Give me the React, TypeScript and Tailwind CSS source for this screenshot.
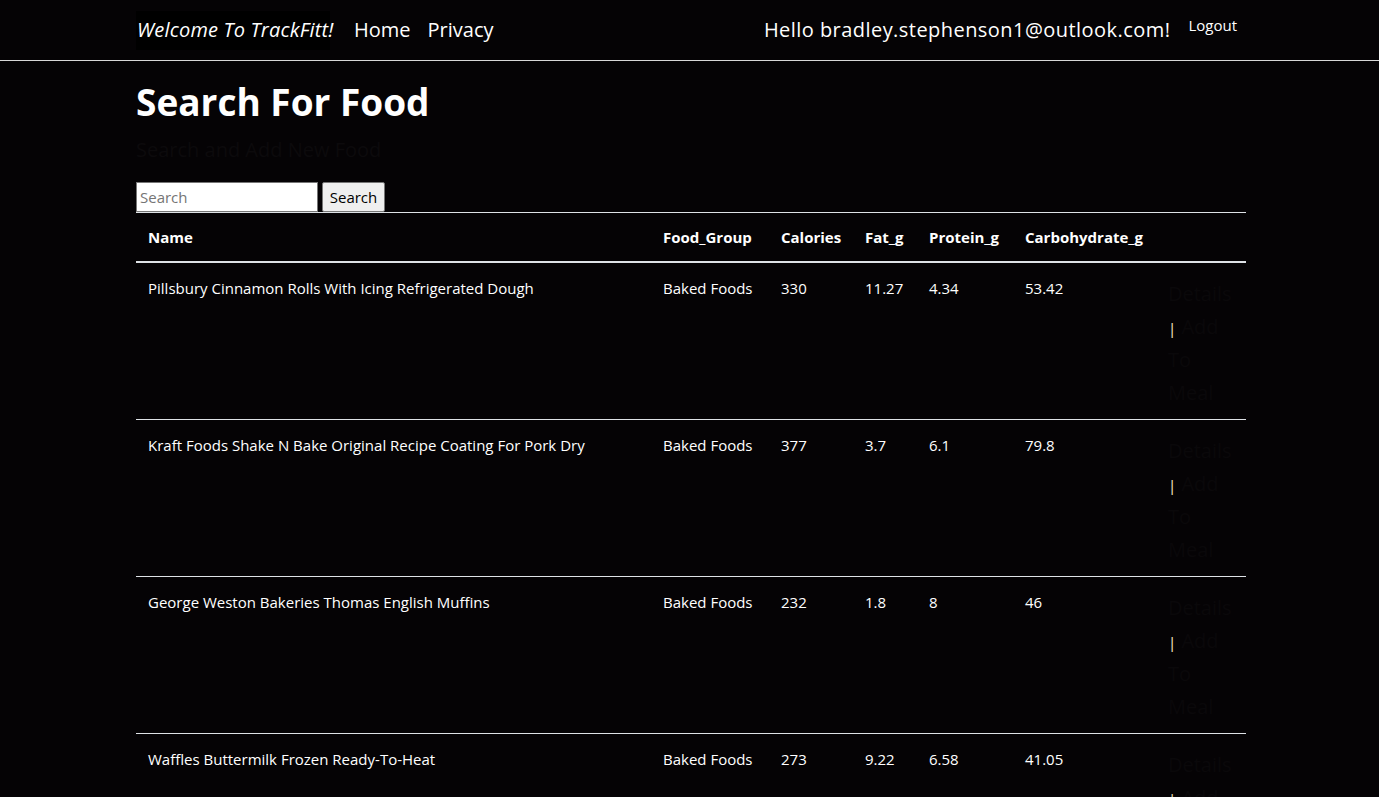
import * as React from "react";

interface Food {
  name: string;
  group: string;
  calories: string;
  fat: string;
  protein: string;
  carbs: string;
}

const foods: Food[] = [
  { name: "Pillsbury Cinnamon Rolls With Icing Refrigerated Dough", group: "Baked Foods", calories: "330", fat: "11.27", protein: "4.34", carbs: "53.42" },
  { name: "Kraft Foods Shake N Bake Original Recipe Coating For Pork Dry", group: "Baked Foods", calories: "377", fat: "3.7", protein: "6.1", carbs: "79.8" },
  { name: "George Weston Bakeries Thomas English Muffins", group: "Baked Foods", calories: "232", fat: "1.8", protein: "8", carbs: "46" },
  { name: "Waffles Buttermilk Frozen Ready-To-Heat", group: "Baked Foods", calories: "273", fat: "9.22", protein: "6.58", carbs: "41.05" },
];

const font = { fontFamily: '"Segoe UI", "Open Sans", "Noto Sans", sans-serif' };

export default function App() {
  return (
    <div className="min-h-[797px] bg-[#050305] text-white" style={font}>
      <nav className="h-[61px] border-b border-[#d8d8d8]">
        <div className="ml-[136px] w-[1110px] h-full flex items-center">
          <a className="bg-black italic text-[20px] pl-[1px] h-[39px] w-[194px] whitespace-nowrap flex items-center mr-[24px] tracking-[0.2px]">
            Welcome To TrackFitt!
          </a>
          <a className="text-[20px] mr-[17px]">Home</a>
          <a className="text-[20px]">Privacy</a>
          <div className="flex-1" />
          <span className="text-[20px] tracking-[0.45px]">Hello bradley.stephenson1@outlook.com!</span>
          <a className="text-[15px] ml-[18px] mr-[9px] -mt-[9px]">Logout</a>
        </div>
      </nav>

      <main className="ml-[136px] w-[1110px]">
        <h1 className="text-[37px] font-bold leading-[46px] mt-[18px]">Search For Food</h1>
        <p className="text-[20px] text-[#0c0a0c] leading-[30px] mt-[10px]">Search and Add New Food</p>

        <form className="flex items-end gap-[4px] mt-[17px]">
          <input
            placeholder="Search"
            className="w-[182px] h-[30px] bg-white border border-[#767676] px-[3px] text-[15px] text-black placeholder:text-[#757575] outline-none"
          />
          <button type="button" className="h-[30px] w-[63px] bg-[#efefef] border border-[#767676] rounded-[2px] text-[15px] text-black">
            Search
          </button>
        </form>

        <table className="w-full table-fixed border-t border-[#dee2e6] text-[15px]">
          <colgroup>
            <col className="w-[515px]" />
            <col className="w-[118px]" />
            <col className="w-[84px]" />
            <col className="w-[64px]" />
            <col className="w-[96px]" />
            <col className="w-[144px]" />
            <col className="w-[89px]" />
          </colgroup>
          <thead>
            <tr className="border-b-2 border-[#dee2e6] h-[49px]">
              {["Name", "Food_Group", "Calories", "Fat_g", "Protein_g", "Carbohydrate_g", ""].map((h, i) => (
                <th key={i} className="text-left font-bold px-[12px] align-middle">{h}</th>
              ))}
            </tr>
          </thead>
          <tbody>
            {foods.map((f, i) => (
              <tr key={i} className="border-b border-[#dee2e6]">
                <td className="px-[12px] pt-[12px] align-top leading-[26px]">{f.name}</td>
                <td className="px-[12px] pt-[12px] align-top leading-[26px]">{f.group}</td>
                <td className="px-[12px] pt-[12px] align-top leading-[26px]">{f.calories}</td>
                <td className="px-[12px] pt-[12px] align-top leading-[26px]">{f.fat}</td>
                <td className="px-[12px] pt-[12px] align-top leading-[26px]">{f.protein}</td>
                <td className="px-[12px] pt-[12px] align-top leading-[26px]">{f.carbs}</td>
                <td className="pl-[11px] pr-[8px] pt-[14px] pb-[10px] align-top text-[20px] leading-[33px]">
                  <a className="text-[#0a080a]">Details</a>{" "}
                  <span className="inline-block text-[#fff0c8] text-[15px] leading-[16px] align-middle">|</span>{" "}
                  <a className="text-[#0a080a]">Add To Meal</a>
                </td>
              </tr>
            ))}
          </tbody>
        </table>
      </main>
    </div>
  );
}
